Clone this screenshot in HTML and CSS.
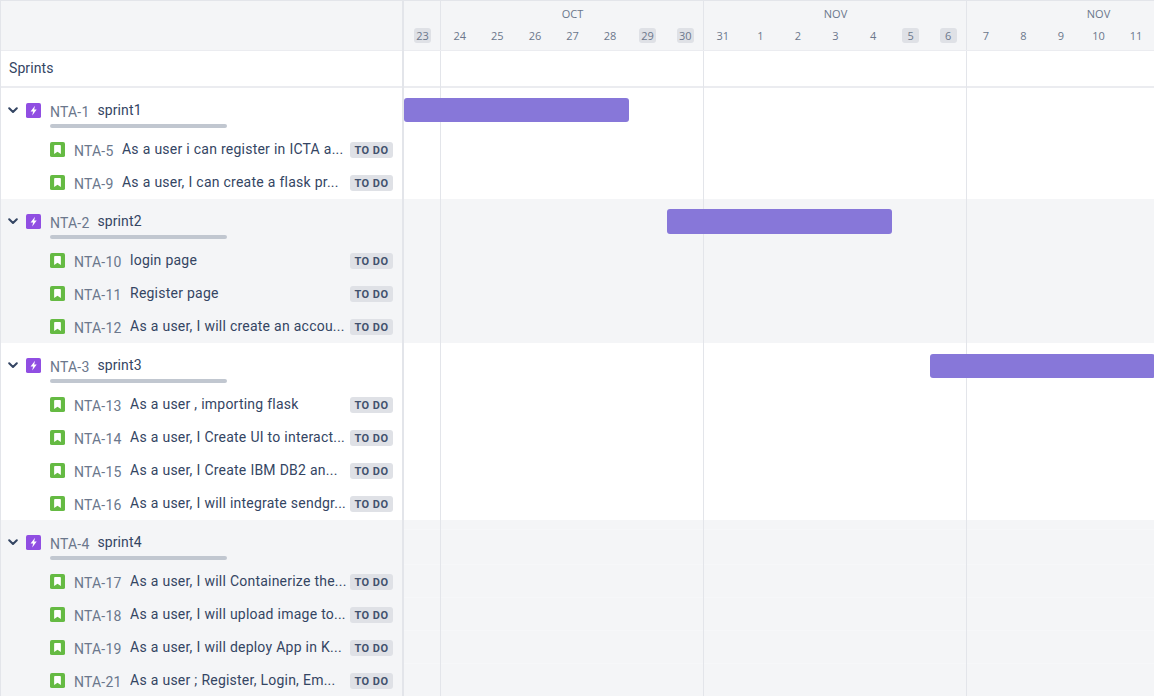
FILE: index.html
```html
<!DOCTYPE html>
<html lang="en">
<head>
<meta charset="utf-8">
<title>Roadmap</title>
<link rel="stylesheet" href="styles.css">
</head>
<body>
<svg class="defs" width="0" height="0" aria-hidden="true">
  <symbol id="i-epic" viewBox="0 0 16 16"><rect width="16" height="16" rx="2" fill="#904ee2"/><path d="M9.6 2.8 4.9 9h2.7L6.6 13.2 11.4 7H8.7z" fill="#fff"/></symbol>
  <symbol id="i-story" viewBox="0 0 16 16"><rect width="16" height="16" rx="2" fill="#65ba43"/><path d="M4.4 4C4.4 3.5 4.8 3.1 5.300 3.100h5.400c.5 0 .9.4.9.9v8.700L8 10.300l-3.600 2.400z" fill="#fff"/></symbol>
  <symbol id="i-chev" viewBox="0 0 10 7"><path d="M1.200 1.200 5 5l3.800-3.800" fill="none" stroke="#344563" stroke-width="2" stroke-linecap="round" stroke-linejoin="round"/></symbol>
</svg>
<main class="roadmap">
  <section class="side">
    <div class="side-head"></div>
    <div class="side-label">Sprints</div>

    <div class="group">
      <div class="epic"><svg class="chev"><use href="#i-chev"/></svg><svg class="ic"><use href="#i-epic"/></svg><div class="epic-body"><div class="epic-line"><span class="key">NTA-1</span><span class="name">sprint1</span></div><div class="progress"></div></div></div>
      <div class="story"><svg class="ic-s"><use href="#i-story"/></svg><span class="key">NTA-5</span><span class="title">As a user i can register in ICTA a...</span><span class="lozenge">TO DO</span></div>
      <div class="story"><svg class="ic-s"><use href="#i-story"/></svg><span class="key">NTA-9</span><span class="title">As a user, I can create a flask pr...</span><span class="lozenge">TO DO</span></div>
    </div>

    <div class="group alt">
      <div class="epic"><svg class="chev"><use href="#i-chev"/></svg><svg class="ic"><use href="#i-epic"/></svg><div class="epic-body"><div class="epic-line"><span class="key">NTA-2</span><span class="name">sprint2</span></div><div class="progress"></div></div></div>
      <div class="story"><svg class="ic-s"><use href="#i-story"/></svg><span class="key">NTA-10</span><span class="title">login page</span><span class="lozenge">TO DO</span></div>
      <div class="story"><svg class="ic-s"><use href="#i-story"/></svg><span class="key">NTA-11</span><span class="title">Register page</span><span class="lozenge">TO DO</span></div>
      <div class="story"><svg class="ic-s"><use href="#i-story"/></svg><span class="key">NTA-12</span><span class="title">As a user, I will create an accou...</span><span class="lozenge">TO DO</span></div>
    </div>

    <div class="group">
      <div class="epic"><svg class="chev"><use href="#i-chev"/></svg><svg class="ic"><use href="#i-epic"/></svg><div class="epic-body"><div class="epic-line"><span class="key">NTA-3</span><span class="name">sprint3</span></div><div class="progress"></div></div></div>
      <div class="story"><svg class="ic-s"><use href="#i-story"/></svg><span class="key">NTA-13</span><span class="title">As a user , importing flask</span><span class="lozenge">TO DO</span></div>
      <div class="story"><svg class="ic-s"><use href="#i-story"/></svg><span class="key">NTA-14</span><span class="title">As a user, I Create UI to interact...</span><span class="lozenge">TO DO</span></div>
      <div class="story"><svg class="ic-s"><use href="#i-story"/></svg><span class="key">NTA-15</span><span class="title">As a user, I Create IBM DB2 an...</span><span class="lozenge">TO DO</span></div>
      <div class="story"><svg class="ic-s"><use href="#i-story"/></svg><span class="key">NTA-16</span><span class="title">As a user, I will integrate sendgr...</span><span class="lozenge">TO DO</span></div>
    </div>

    <div class="group alt">
      <div class="epic"><svg class="chev"><use href="#i-chev"/></svg><svg class="ic"><use href="#i-epic"/></svg><div class="epic-body"><div class="epic-line"><span class="key">NTA-4</span><span class="name">sprint4</span></div><div class="progress"></div></div></div>
      <div class="story"><svg class="ic-s"><use href="#i-story"/></svg><span class="key">NTA-17</span><span class="title">As a user, I will Containerize the...</span><span class="lozenge">TO DO</span></div>
      <div class="story"><svg class="ic-s"><use href="#i-story"/></svg><span class="key">NTA-18</span><span class="title">As a user, I will upload image to...</span><span class="lozenge">TO DO</span></div>
      <div class="story"><svg class="ic-s"><use href="#i-story"/></svg><span class="key">NTA-19</span><span class="title">As a user, I will deploy App in K...</span><span class="lozenge">TO DO</span></div>
      <div class="story"><svg class="ic-s"><use href="#i-story"/></svg><span class="key">NTA-21</span><span class="title">As a user ; Register, Login, Em...</span><span class="lozenge">TO DO</span></div>
    </div>
  </section>

  <section class="time">
    <header class="time-head">
      <div class="week first">
        <div class="days"><span class="day off">23</span></div>
      </div>
      <div class="week">
        <div class="month">OCT</div>
        <div class="days"><span class="day">24</span><span class="day">25</span><span class="day">26</span><span class="day">27</span><span class="day">28</span><span class="day off">29</span><span class="day off">30</span></div>
      </div>
      <div class="week">
        <div class="month">NOV</div>
        <div class="days"><span class="day">31</span><span class="day">1</span><span class="day">2</span><span class="day">3</span><span class="day">4</span><span class="day off">5</span><span class="day off">6</span></div>
      </div>
      <div class="week">
        <div class="month">NOV</div>
        <div class="days"><span class="day">7</span><span class="day">8</span><span class="day">9</span><span class="day">10</span><span class="day">11</span><span class="day"></span><span class="day"></span></div>
      </div>
    </header>
    <div class="track-label"></div>
    <div class="track t2"><div class="bar b1"></div></div>
    <div class="track t3 alt"><div class="bar b2"></div></div>
    <div class="track t4"><div class="bar b3"></div></div>
    <div class="track t5 alt"></div>
    <div class="lines"><i class="line l1"></i><i class="line l2"></i><i class="line l3"></i></div>
  </section>
</main>
</body>
</html>
```
FILE: styles.css
```css
* { box-sizing: border-box; }
html, body { margin: 0; height: 100%; overflow: hidden; background: #fff; }
body { font-family: "Open Sans", "Noto Sans", "Liberation Sans", sans-serif; color: #172b4d; }
.defs { position: absolute; }
.roadmap { display: flex; width: 1154px; height: 696px; overflow: hidden; border-top: 1px solid #e3e5ea; }

.side { flex: 0 0 404px; height: 760px; border-left: 1px solid #e3e5ea; border-right: 2px solid #e3e5ea; }
.side-head { height: 50px; background: #f4f5f7; border-bottom: 1px solid #ebecf0; }
.side-label { height: 37px; padding: 0 8px 2px; display: flex; align-items: center; font: 14px/20px Roboto, sans-serif; letter-spacing: .1px; color: #344563; border-bottom: 2px solid #ebecf0; }
.group { padding-bottom: 1px; }
.group.alt { background: #f4f5f7; }

.epic { height: 44px; display: flex; align-items: flex-start; padding: 15px 0 0 6px; }
.chev { width: 10px; height: 7px; margin: 4px 0 0 1px; }
.ic { width: 15px; height: 15px; margin-left: 8px; flex: none; }
.epic-body { margin-left: 9px; width: 177px; }
.epic-line { display: flex; height: 21px; align-items: flex-start; margin-top: -3px; }
.epic-line .key { margin-top: 2px; }
.progress { height: 4px; margin-top: 3px; background: #c1c7d0; border-radius: 2px; }

.story { height: 33px; display: flex; align-items: center; padding: 2px 0 0 49px; }
.ic-s { width: 15px; height: 15px; flex: none; }
.key { font: 14px/20px Roboto, sans-serif; color: #6b778c; white-space: nowrap; letter-spacing: .2px; }
.story .key { margin: 2px 0 0 9px; }
.name { font: 14px/20px Roboto, sans-serif; letter-spacing: .1px; color: #344563; margin-left: 8px; }
.title { font: 14px/20px Roboto, sans-serif; letter-spacing: .22px; word-spacing: .2px; color: #344563; margin-left: 8.500px; flex: 1; min-width: 0; white-space: nowrap; overflow: hidden; margin-top: -2px; }
.lozenge { flex: none; width: 43px; height: 16px; margin-right: 9px; background: #dfe1e6; border-radius: 3px; color: #42526e; font: 700 11px/17px Roboto, sans-serif; letter-spacing: .5px; text-align: center; }

.time { position: relative; flex: 1; min-width: 0; }
.time-head { display: grid; grid-template-columns: 37px repeat(3, 263px); height: 50px; background: #f4f5f7; border-bottom: 1px solid #ebecf0; }
.week { border-left: 1px solid #e3e5ea; margin-left: -1px; }
.week.first { border-left: 0; margin-left: 0; }
.month { height: 27px; padding-top: 5px; text-align: center; font: 11px/16px "Open Sans", sans-serif; color: #6b778c; }
.days { display: grid; grid-template-columns: repeat(7, 1fr); }
.first .days { grid-template-columns: 1fr; padding-top: 27px; }
.day { justify-self: center; width: 17px; height: 15px; border-radius: 3px; text-align: center; font: 11px/15px "Open Sans", sans-serif; color: #6b778c; white-space: nowrap; }
.day.off { background: #dfe1e6; }
.track-label { height: 37px; border-bottom: 2px solid #ebecf0; }
.track { position: relative; }
.track.t2 { height: 111px; }
.track.t3 { height: 144px; }
.track.t4 { height: 177px; }
.track.t5 { height: 200px; }
.track.alt { background: #f4f5f7; }
.track.t5 { background: repeating-linear-gradient(to bottom, #f4f5f7 0 32px, #f6f7f9 32px 33px) 0 12px #f4f5f7; }
.bar { position: absolute; z-index: 1; height: 24px; background: #8777d9; border-radius: 3px; }
.b1 { left: 0; top: 10px; width: 225px; }
.b2 { left: 263px; top: 10px; width: 225px; height: 25px; }
.b3 { left: 526px; top: 11px; width: 225px; }
.lines { position: absolute; inset: 50px 0 0 36px; pointer-events: none; }
.line { position: absolute; top: 0; bottom: 0; width: 1px; background: #e3e5ea; }
.l1 { left: 0; }
.l2 { left: 263px; }
.l3 { left: 526px; }
```
